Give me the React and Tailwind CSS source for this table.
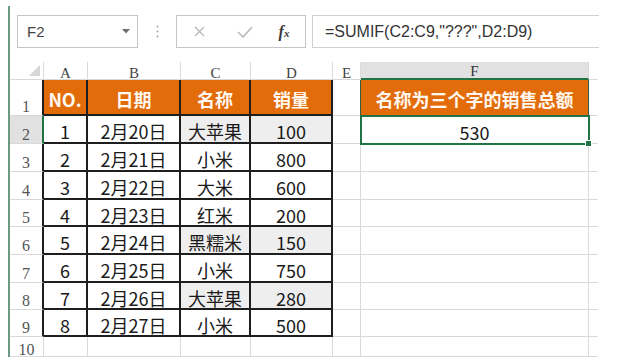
import React from "react";

const data = [
  ["1", "2月20日", "大苹果", "100"],
  ["2", "2月21日", "小米", "800"],
  ["3", "2月22日", "大米", "600"],
  ["4", "2月23日", "红米", "200"],
  ["5", "2月24日", "黑糯米", "150"],
  ["6", "2月25日", "小米", "750"],
  ["7", "2月26日", "大苹果", "280"],
  ["8", "2月27日", "小米", "500"],
];
const greyRows = [0, 4, 6];

const rowHeader =
  "flex items-end justify-center leading-none text-[16px] text-[#555] font-['Liberation_Serif',serif] border-b border-b-[#d9d9d9] border-r-2 border-r-[#1e1e1e]";
const rowHeaderSel =
  "flex items-end justify-center leading-none text-[16px] text-[#555] font-['Liberation_Serif',serif] border-b border-b-[#d9d9d9] border-r-2 border-r-[#217346] bg-[#e1e1e1]";
const rowHeaderPlain =
  "flex items-end justify-center leading-none text-[16px] text-[#555] font-['Liberation_Serif',serif] border-b border-r border-[#d9d9d9]";
const colHead =
  "flex items-end justify-center leading-none text-[15px] text-[#444] font-['Liberation_Serif',serif] border-r border-b border-[#d9d9d9]";
const colHeadSel =
  "flex items-end justify-center leading-none text-[15px] text-[#333] font-['Liberation_Serif',serif] border-r border-r-[#d9d9d9] border-b-2 border-b-[#217346] bg-[#e1e1e1]";
const tableCell =
  "flex items-center justify-center leading-none pt-[4px] text-[18px] text-[#1a1a1a] border-r-2 border-b-2 border-[#1e1e1e]";
const tableCellGrey =
  "flex items-center justify-center leading-none pt-[4px] text-[18px] text-[#1a1a1a] border-r-2 border-b-2 border-[#1e1e1e] bg-[#eeeeee]";
const orangeCell =
  "flex items-center justify-center leading-none pt-[3px] text-[18px] font-bold text-[#fff8f0] bg-[#e26b0a] border-r-2 border-b-2 border-[#1e1e1e]";
const emptyCell = "border-r border-b border-[#d9d9d9]";
const gCell = "border-b border-[#d9d9d9]";

function Grid() {
  const cells = [];
  cells.push(
    <div key="corner" className="flex items-end justify-end pr-[3px] pb-[3px] border-r border-b border-[#d9d9d9]">
      <svg width="11" height="11" viewBox="0 0 11 11">
        <path d="M11 0 L11 11 L0 11 Z" fill="#d6d6d6" />
      </svg>
    </div>
  );
  ["A", "B", "C", "D", "E"].forEach((l) =>
    cells.push(
      <div key={"h" + l} className={colHead}>
        <span className="mb-[-2px]">{l}</span>
      </div>
    )
  );
  cells.push(
    <div key="hF" className={colHeadSel}>
      <span className="mb-[-1px]">F</span>
    </div>
  );
  cells.push(<div key="hG" className={gCell} />);

  cells.push(
    <div key="r1" className={rowHeader}>
      1
    </div>
  );
  ["NO.", "日期", "名称", "销量"].forEach((t) =>
    cells.push(
      <div key={"o" + t} className={orangeCell}>
        {t}
      </div>
    )
  );
  cells.push(<div key="e1" className="border-r border-r-[#2f5e44] border-b border-b-[#d9d9d9]" />);
  cells.push(
    <div
      key="f1"
      className="flex items-center justify-center leading-none pt-[3px] text-[18px] font-bold text-[#fff8f0] bg-[#e26b0a] border-r border-b border-[#2f5e44]"
    >
      名称为三个字的销售总额
    </div>
  );
  cells.push(<div key="g1" className={gCell} />);

  data.forEach((row, i) => {
    const grey = greyRows.includes(i);
    cells.push(
      <div key={"rh" + i} className={i === 0 ? rowHeaderSel : rowHeader}>
        {i + 2}
      </div>
    );
    row.forEach((t, j) =>
      cells.push(
        <div key={"c" + i + "-" + j} className={grey && j >= 2 ? tableCellGrey : tableCell}>
          {t}
        </div>
      )
    );
    cells.push(<div key={"e" + i} className={emptyCell} />);
    if (i === 0) {
      cells.push(
        <div
          key="f2"
          className="relative z-10 flex items-center justify-center leading-none pt-[4px] text-[18px] text-[#1a1a1a] border-r border-b border-[#d9d9d9] outline-2 outline-[#217346] -outline-offset-1"
        >
          530
          <div className="absolute right-[-4px] bottom-[-4px] w-[7px] h-[7px] bg-[#217346] border border-white" />
        </div>
      );
    } else {
      cells.push(<div key={"f" + i} className={emptyCell} />);
    }
    cells.push(<div key={"g" + i} className={gCell} />);
  });

  cells.push(
    <div key="r10" className={rowHeaderPlain}>
      <span className="mb-[-2px]">10</span>
    </div>
  );
  ["a", "b", "c", "d", "e", "f"].forEach((l) => cells.push(<div key={"x" + l} className={emptyCell} />));
  cells.push(<div key="xg" className={gCell} />);

  return (
    <div className="grid grid-cols-[34px_44px_93px_70px_82px_28px_228px_9px] grid-rows-[18px_36px_28px_28px_28px_27px_28px_28px_27px_27px_20px] font-['Noto_Sans_CJK_SC',sans-serif]">
      {cells}
    </div>
  );
}

function Toolbar() {
  return (
    <div className="h-[62px] flex items-start pt-[15px] font-['Liberation_Sans',sans-serif]">
      <div className="ml-[7px] w-[121px] h-[33px] border border-[#c6c6c6] flex items-center justify-between pl-[9px] pr-[7px]">
        <span className="text-[15px] text-[#444] leading-none">F2</span>
        <svg width="8" height="5" viewBox="0 0 8 5">
          <path d="M0 0 L8 0 L4 4.5 Z" fill="#6f6f6f" />
        </svg>
      </div>
      <div className="w-[38px] h-[33px] flex items-center justify-center">
        <svg width="3" height="13" viewBox="0 0 3 13">
          <circle cx="1.5" cy="1.5" r="1" fill="#a6a6a6" />
          <circle cx="1.5" cy="6.5" r="1" fill="#a6a6a6" />
          <circle cx="1.5" cy="11.5" r="1" fill="#a6a6a6" />
        </svg>
      </div>
      <div className="w-[130px] h-[33px] border border-[#c6c6c6] flex items-center">
        <div className="w-[45px] flex justify-center">
          <svg width="11" height="11" viewBox="0 0 11 11">
            <path d="M1 1 L10 10 M10 1 L1 10" stroke="#b8b8b8" strokeWidth="1.4" />
          </svg>
        </div>
        <div className="w-[45px] flex justify-center">
          <svg width="16" height="12" viewBox="0 0 16 12">
            <path d="M1 6 L6 11 L15 1" stroke="#b8b8b8" strokeWidth="1.6" fill="none" />
          </svg>
        </div>
        <div className="w-[34px] flex justify-center items-baseline font-['Liberation_Serif',serif] italic font-bold text-[#3a3a3a]">
          <span className="text-[16px] leading-none">f</span>
          <span className="text-[11px] leading-none">x</span>
        </div>
      </div>
      <div className="ml-[6px] w-[287px] h-[33px] border border-r-0 border-[#d0d0d0] flex items-center pl-[12px] text-[16px] text-[#333] leading-none">
        =SUMIF(C2:C9,"???",D2:D9)
      </div>
    </div>
  );
}

export default function App() {
  return (
    <div className="w-[633px] h-[357px] overflow-hidden bg-white flex">
      <div className="w-[8px] shrink-0" />
      <div className="w-[2px] shrink-0 mt-[6px] bg-[#6a9a82]" />
      <div className="flex flex-col">
        <Toolbar />
        <Grid />
      </div>
    </div>
  );
}
